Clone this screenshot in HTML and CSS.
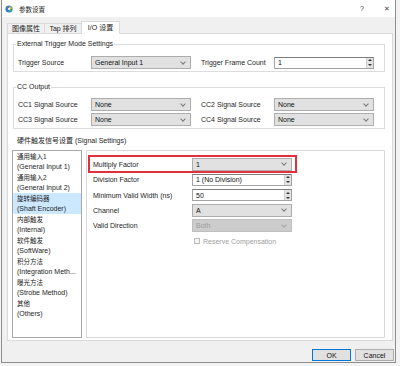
FILE: index.html
```html
<!DOCTYPE html>
<html lang="zh-CN">
<head>
    <meta charset="UTF-8">
    <meta name="viewport" content="width=device-width, initial-scale=1.0">
    <title>参数设置</title>
    <link rel="stylesheet" href="styles.css">
</head>
<body>
    <div class="window">
        <div class="titlebar">
            <svg class="app-icon" width="8" height="8" viewBox="0 0 8 8">
                <circle cx="4" cy="4" r="3.6" fill="#2d7fd0"/>
                <path d="M4 1.2 A2.8 2.8 0 0 1 6.8 4 L4 4 Z" fill="#f2b81d"/>
                <path d="M4 4 L6.8 4 A2.8 2.8 0 0 1 4 6.8 Z" fill="#4caf50"/>
                <circle cx="4" cy="4" r="1.1" fill="#fff"/>
            </svg>
            <span class="title">参数设置</span>
            <span class="help">?</span>
            <span class="close">✕</span>
        </div>

        <div class="tabs">
            <div class="tab">图像属性</div>
            <div class="tab">Tap 排列</div>
            <div class="tab active">I/O 设置</div>
        </div>

        <div class="panel">
            <fieldset class="group group-trigger">
                <legend>External Trigger Mode Settings</legend>
                <div class="row">
                    <span class="label">Trigger Source</span>
                    <div class="combo">General Input 1</div>
                    <span class="label label-2">Trigger Frame Count</span>
                    <div class="spin">
                        <span class="value">1</span>
                        <span class="arrows"><i class="up"></i><i class="down"></i></span>
                    </div>
                </div>
            </fieldset>

            <fieldset class="group group-cc">
                <legend>CC Output</legend>
                <div class="row">
                    <span class="label">CC1 Signal Source</span>
                    <div class="combo">None</div>
                    <span class="label label-2">CC2 Signal Source</span>
                    <div class="combo">None</div>
                </div>
                <div class="row">
                    <span class="label">CC3 Signal Source</span>
                    <div class="combo">None</div>
                    <span class="label label-2">CC4 Signal Source</span>
                    <div class="combo">None</div>
                </div>
            </fieldset>

            <div class="section-title">硬件触发信号设置 (Signal Settings)</div>

            <div class="signal">
                <ul class="source-list">
                    <li><span>通用输入1</span><span>(General Input 1)</span></li>
                    <li><span>通用输入2</span><span>(General Input 2)</span></li>
                    <li class="selected"><span>旋转编码器</span><span>(Shaft Encoder)</span></li>
                    <li><span>内部触发</span><span>(Internal)</span></li>
                    <li><span>软件触发</span><span>(SoftWare)</span></li>
                    <li><span>积分方法</span><span>(Integration Meth...</span></li>
                    <li><span>曝光方法</span><span>(Strobe Method)</span></li>
                    <li><span>其他</span><span>(Others)</span></li>
                </ul>

                <div class="detail">
                    <div class="field highlight">
                        <span class="field-label">Multiply Factor</span>
                        <div class="combo">1</div>
                    </div>
                    <div class="fields">
                        <div class="field">
                            <span class="field-label">Division Factor</span>
                            <div class="spin">
                                <span class="value">1 (No Division)</span>
                                <span class="arrows"><i class="up"></i><i class="down"></i></span>
                            </div>
                        </div>
                        <div class="field">
                            <span class="field-label">Minimum Valid Width (ns)</span>
                            <div class="spin">
                                <span class="value">50</span>
                                <span class="arrows"><i class="up"></i><i class="down"></i></span>
                            </div>
                        </div>
                        <div class="field">
                            <span class="field-label">Channel</span>
                            <div class="combo">A</div>
                        </div>
                        <div class="field">
                            <span class="field-label">Valid Direction</span>
                            <div class="combo disabled">Both</div>
                        </div>
                        <div class="field">
                            <span class="field-label"></span>
                            <span class="check disabled"><i class="box"></i>Reserve Compensation</span>
                        </div>
                    </div>
                </div>
            </div>
        </div>

        <div class="buttons">
            <button class="btn default">OK</button>
            <button class="btn">Cancel</button>
        </div>
    </div>
</body>
</html>
```

FILE: styles.css
```css
* {
    box-sizing: border-box;
}
body {
    margin: 0;
    background: #f3f3f3;
    font-family: "Liberation Sans", "Noto Sans CJK SC", sans-serif;
    font-size: 7px;
    color: #1e1e1e;
}
.window {
    width: 395px;
    height: 363px;
    margin-left: 1px;
    background: #f0f0f0;
    border: 1px solid #8e8e8e;
    border-top: none;
    display: flex;
    flex-direction: column;
}

/* title bar */
.titlebar {
    height: 17px;
    background: #fff;
    display: flex;
    align-items: center;
    padding-left: 3px;
}
.app-icon {
    flex: none;
}
.title {
    margin-left: 6px;
    font-size: 6.5px;
}
.help {
    margin-left: auto;
    color: #444;
}
.close {
    margin: 0 5px 0 20px;
    color: #444;
    font-size: 7px;
}

/* tabs */
.tabs {
    display: flex;
    align-items: flex-end;
    height: 12px;
    margin: 4px 0 0 5px;
}
.tab {
    width: 38px;
    height: 10px;
    margin-right: -1px;
    border: 1px solid #d9d9d9;
    border-bottom: none;
    background: #f0f0f0;
    text-align: center;
    line-height: 9px;
}
.tab.active {
    position: relative;
    z-index: 1;
    width: 39px;
    height: 13px;
    margin-bottom: -1px;
    background: #fff;
    line-height: 12px;
}

/* tab panel */
.panel {
    width: 386px;
    height: 308px;
    margin-left: 5px;
    background: #fff;
    border: 1px solid #d9d9d9;
    display: flex;
    flex-direction: column;
}
.group {
    margin: 0 7px 0 5px;
    padding: 0 4px 2px 4px;
    border: 1px solid #dcdcdc;
    min-width: 0;
}
.group legend {
    margin-left: -2px;
    padding: 0 1px;
    line-height: 8px;
}
.group-trigger {
    margin-top: 6px;
}
.group-trigger .row {
    margin-top: 8px;
}
.group-cc {
    margin-top: 11px;
}
.group-cc .row {
    margin-top: 2px;
}
.group-cc .row:first-of-type {
    margin-top: 7px;
}
.row {
    display: flex;
    align-items: center;
    height: 13px;
}
.label {
    width: 73px;
}
.label-2 {
    margin-left: 10px;
}

.section-title {
    margin: 7px 0 0 9px;
    line-height: 10px;
}

/* controls */
.combo {
    width: 100px;
    height: 13px;
    background: #e1e1e1;
    border: 1px solid #adadad;
    padding-left: 3px;
    display: flex;
    align-items: center;
    justify-content: space-between;
    color: #111;
}
.combo::after {
    content: "";
    width: 3px;
    height: 3px;
    margin: -2px 5px 0 0;
    border-right: 1px solid #7a7a7a;
    border-bottom: 1px solid #7a7a7a;
    transform: rotate(45deg);
}
.combo.disabled {
    background: #cccccc;
    border-color: #bfbfbf;
    color: #9c9c9c;
}
.combo.disabled::after {
    border-color: #a8a8a8;
}
.spin {
    width: 100px;
    height: 12px;
    background: #fff;
    border: 1px solid #a3a3a3;
    border-top-color: #7d7d7d;
    padding-left: 3px;
    display: flex;
    align-items: center;
    color: #111;
}
.spin .value {
    flex: 1;
}
.arrows {
    width: 7px;
    height: 100%;
    display: flex;
    flex-direction: column;
    background: #e3e3e3;
    border-left: 1px solid #cfcfcf;
}
.arrows i {
    flex: 1;
    display: flex;
    align-items: center;
    justify-content: center;
}
.arrows .up::before,
.arrows .down::before {
    content: "";
    border-left: 2px solid transparent;
    border-right: 2px solid transparent;
}
.arrows .up::before {
    border-bottom: 2px solid #333;
}
.arrows .down::before {
    border-top: 2px solid #333;
}

/* signal settings */
.signal {
    display: flex;
    gap: 4px;
    height: 188px;
    margin: 4px 7px 0 4px;
}
.source-list {
    width: 70px;
    margin: 0;
    padding: 0;
    list-style: none;
    border: 1px solid #a8a8a8;
}
.source-list li {
    height: 21px;
    padding: 1px 0 0 4px;
    display: flex;
    flex-direction: column;
    line-height: 9.5px;
    white-space: nowrap;
}
.source-list li span:first-child {
    font-size: 6.5px;
}
.source-list li.selected {
    background: #cce8ff;
}

.detail {
    flex: 1;
    border: 1px solid #d9d9d9;
    padding-top: 4px;
}
.field {
    display: flex;
    align-items: center;
    height: 15.4px;
    padding-left: 6px;
}
.field-label {
    width: 99px;
}
.field.highlight {
    width: 209px;
    height: 18px;
    margin-left: 1px;
    padding-left: 3px;
    border: 2px solid #e4303e;
}
.fields {
    margin-top: -1px;
}
.check {
    display: flex;
    align-items: center;
    gap: 3px;
    margin-left: 2px;
}
.check .box {
    width: 6px;
    height: 6px;
    border: 1px solid #bcbcbc;
    background: #f6f6f6;
}
.check.disabled {
    color: #9e9e9e;
}

/* dialog buttons */
.buttons {
    display: flex;
    justify-content: flex-end;
    gap: 4px;
    margin-top: 8px;
    padding-right: 1px;
}
.btn {
    width: 39px;
    height: 12px;
    padding: 0;
    background: #e1e1e1;
    border: 1px solid #adadad;
    font-family: inherit;
    font-size: 7px;
    color: #111;
}
.btn.default {
    border-color: #0078d7;
}
```
